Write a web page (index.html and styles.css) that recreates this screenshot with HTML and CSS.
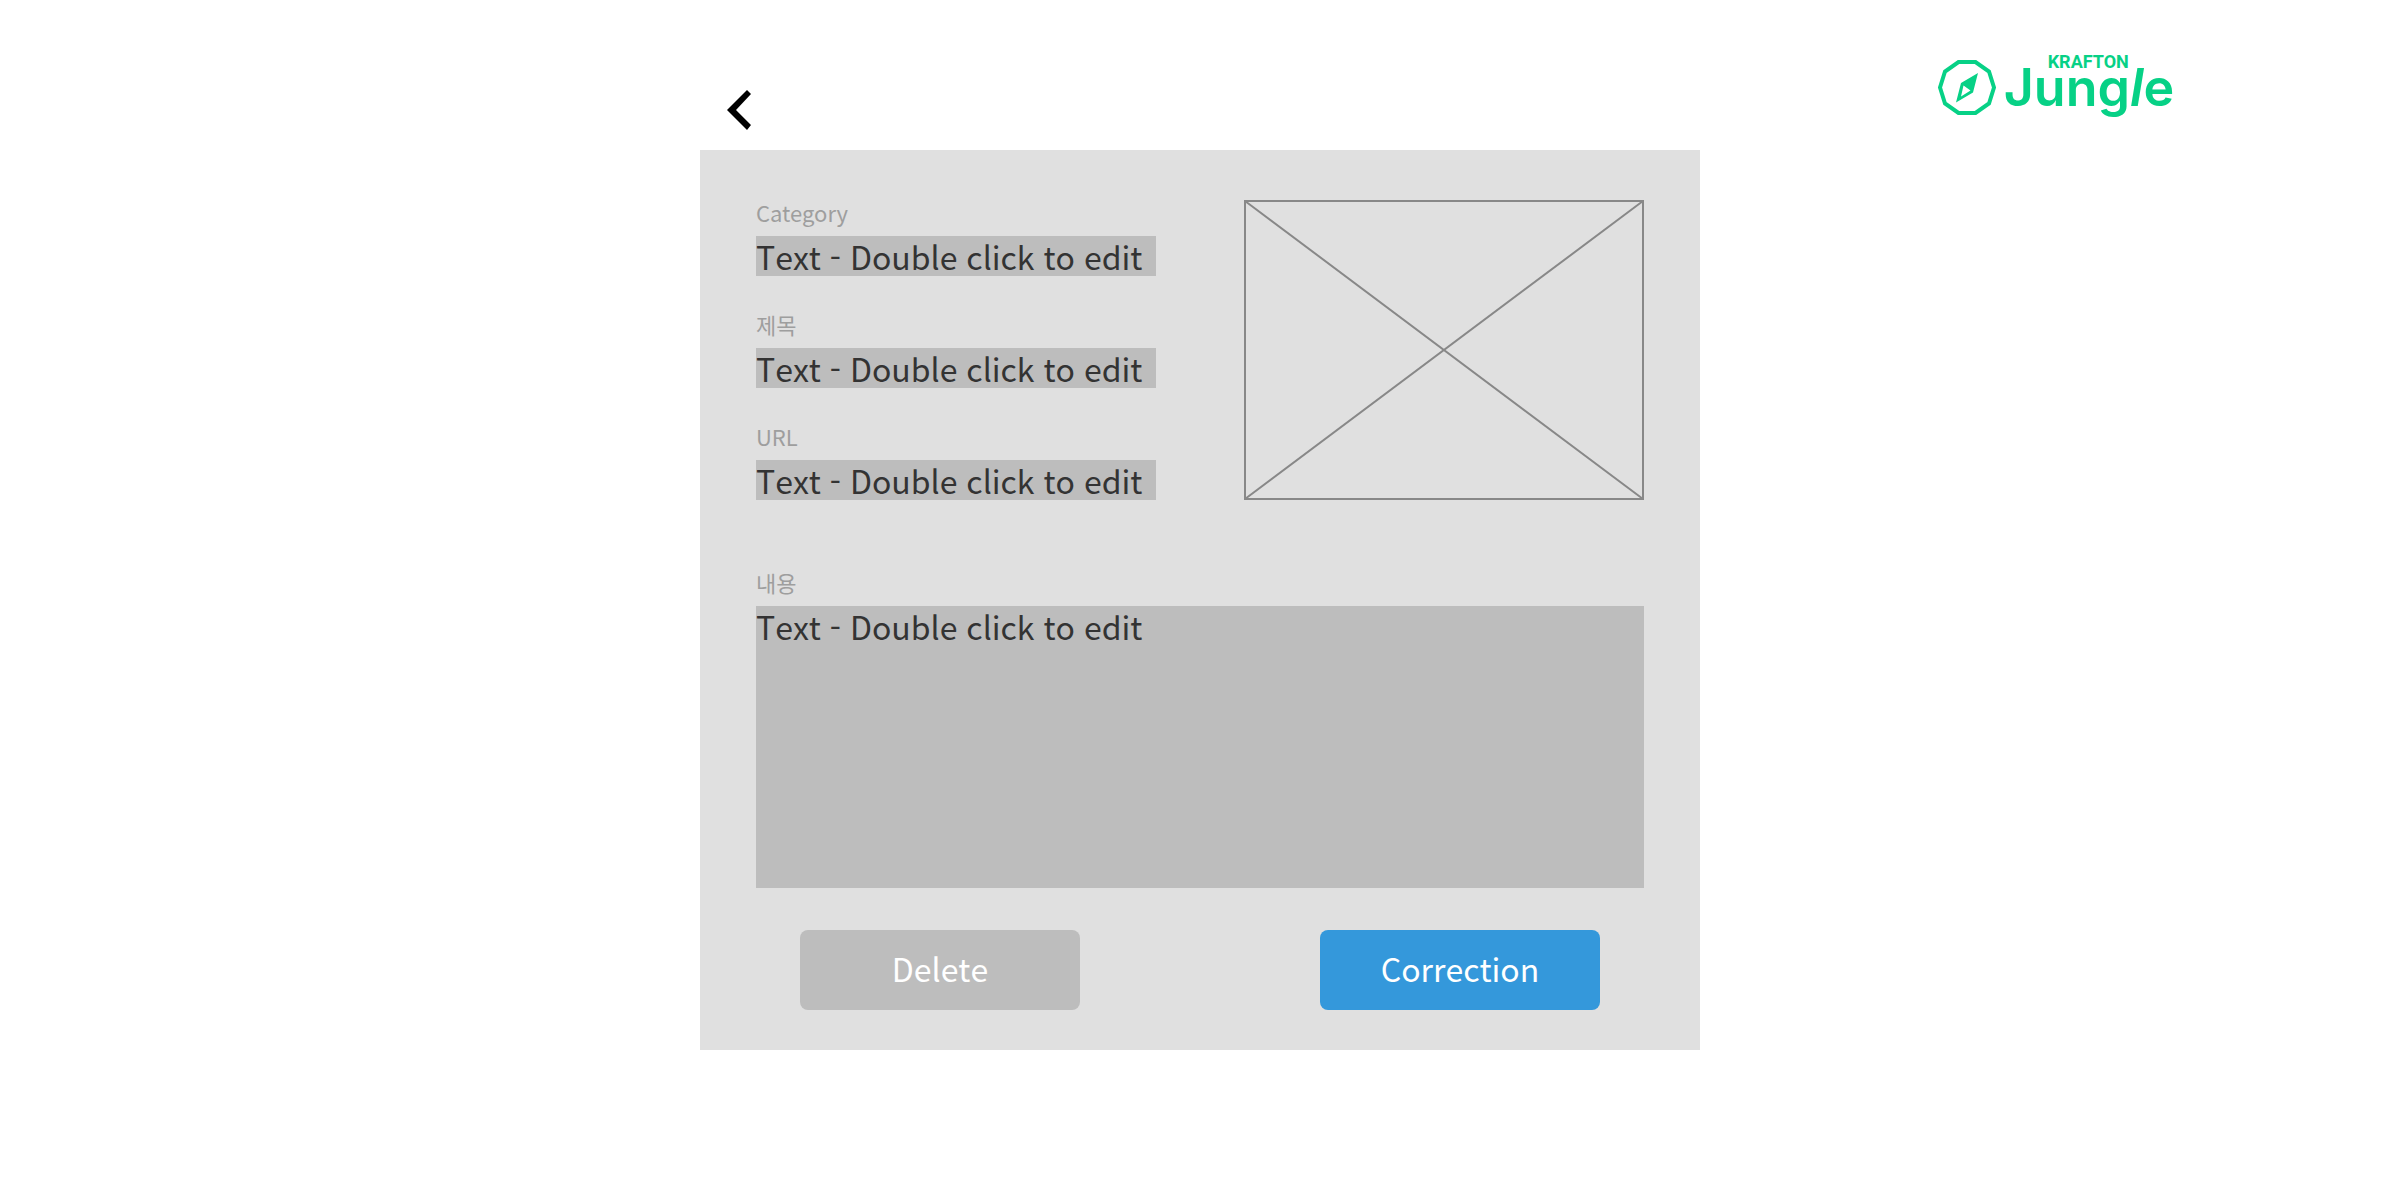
FILE: index.html
```html
<!DOCTYPE html>
<html lang="ko">
<head>
<meta charset="utf-8">
<meta name="viewport" content="width=device-width, initial-scale=1">
<title>KRAFTON Jungle</title>
<link rel="stylesheet" href="styles.css">
</head>
<body>
<header class="header">
  <nav class="header-main">
    <a class="back" href="#" aria-label="Back">
      <svg class="back-icon" viewBox="0 0 24 40" aria-hidden="true"><path d="M20 0L24 4L9 20L24 35L20 40L0 20Z"/></svg>
    </a>
  </nav>
  <a class="logo" href="#">
    <svg class="logo-mark" viewBox="0 0 58 56" aria-hidden="true">
      <path class="logo-ring" d="M20.500 2H37.500L51 11.500L56 27.500L51 43.500L37.500 53H20.500L7 43.500L2 27.500L7 11.500Z"/>
      <path class="logo-needle" fill-rule="evenodd" d="M40 13L35 32.500L18 42.500L23 23ZM25.500 25.500L23 36.500L32.500 30.500Z"/>
    </svg>
    <span class="logo-words">
      <span class="logo-company">KRAFTON</span>
      <span class="logo-name">Jung<i>l</i>e</span>
    </span>
  </a>
</header>
<main class="page">
  <form class="card">
    <div class="summary">
      <div class="fields">
        <div class="field">
          <label class="label" for="category">Category</label>
          <input class="control" id="category" type="text" value="Text - Double click to edit">
        </div>
        <div class="field">
          <label class="label" for="title">제목</label>
          <input class="control" id="title" type="text" value="Text - Double click to edit">
        </div>
        <div class="field">
          <label class="label" for="url">URL</label>
          <input class="control" id="url" type="text" value="Text - Double click to edit">
        </div>
      </div>
      <svg class="preview" viewBox="0 0 400 300" role="img" aria-label="Image">
        <path d="M1 1H399V299H1ZM1 1L399 299M399 1L1 299"/>
      </svg>
    </div>
    <div class="field">
      <label class="label" for="content">내용</label>
      <textarea class="control content" id="content">Text - Double click to edit</textarea>
    </div>
    <div class="actions">
      <button class="button" type="button">Delete</button>
      <button class="button primary" type="submit">Correction</button>
    </div>
  </form>
</main>
</body>
</html>
```
FILE: styles.css
```css
* {
  box-sizing: border-box;
}

body {
  margin: 0;
  background: #fff;
  color: #333;
  font-family: "Noto Sans CJK KR", sans-serif;
}

.header {
  display: grid;
  grid-template-columns: 1fr minmax(0, 1000px) 1fr;
  height: 150px;
}

.header-main {
  grid-column: 2;
  padding: 90px 27px 0;
}

.back {
  display: block;
  width: 24px;
}

.back-icon {
  display: block;
  width: 24px;
  height: 40px;
  fill: #000;
}

.logo {
  display: flex;
  gap: 8px;
  justify-self: center;
  padding: 54px 0 0 12px;
  color: #07d186;
  text-decoration: none;
}

.logo-mark {
  width: 58px;
  height: 56px;
  margin-top: 6px;
}

.logo-ring {
  fill: none;
  stroke: currentColor;
  stroke-width: 4;
}

.logo-needle {
  fill: currentColor;
}

.logo-words {
  display: flex;
  flex-direction: column;
}

.logo-company {
  padding-left: 44px;
  font: 700 18px/16px Roboto, sans-serif;
}

.logo-name {
  font: 600 52px/36px Inter, sans-serif;
}

.card {
  display: flex;
  flex-direction: column;
  max-width: 1000px;
  margin: 0 auto;
  padding: 50px 56px 40px;
  background: #e0e0e0;
}

.summary {
  display: flex;
  justify-content: space-between;
  gap: 40px;
  margin-bottom: 70px;
}

.fields {
  display: flex;
  flex: 0 1 400px;
  flex-direction: column;
  gap: 36px;
}

.field {
  display: flex;
  flex-direction: column;
  gap: 12px;
}

.label {
  color: #9e9e9e;
  font-size: 22px;
  line-height: 24px;
}

.control {
  display: block;
  width: 100%;
  height: 40px;
  margin: 0;
  padding: 0;
  border: 0;
  border-radius: 0;
  background: #bdbdbd;
  color: #333;
  font-family: inherit;
  font-size: 32px;
  font-kerning: none;
  line-height: 40px;
}

.content {
  height: 282px;
  resize: none;
}

.preview {
  flex: 0 1 400px;
  min-width: 0;
  height: 300px;
  fill: none;
  stroke: #888;
  stroke-width: 2;
}

.actions {
  display: flex;
  justify-content: space-between;
  gap: 24px;
  margin-top: 42px;
  padding: 0 44px;
}

.button {
  flex: 0 1 280px;
  height: 80px;
  padding: 0 0 4px;
  border: 0;
  border-radius: 8px;
  background: #bdbdbd;
  color: #fff;
  font-family: inherit;
  font-size: 32px;
  font-kerning: none;
  line-height: 40px;
}

.primary {
  background: #3498db;
}
```
